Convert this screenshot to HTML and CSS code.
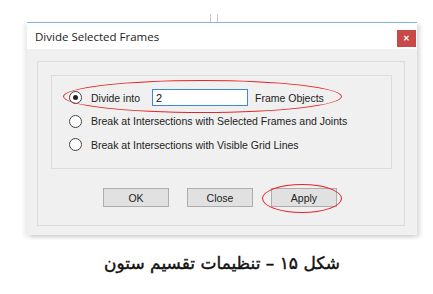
FILE: index.html
```html
<!DOCTYPE html>
<html lang="en">
<head>
    <meta charset="UTF-8">
    <title>Divide Selected Frames</title>
    <link rel="stylesheet" href="styles.css">
</head>
<body>
    <div class="page">
        <div class="splitter"></div>

        <div class="dialog">
            <div class="title-bar">
                <span class="title">Divide Selected Frames</span>
                <button class="close-btn">&#x2715;</button>
            </div>

            <div class="dialog-body">
                <div class="outer-box">
                    <div class="inner-box">
                        <label class="option">
                            <span class="radio checked"></span>
                            <span class="option-label">Divide into</span>
                            <input class="count-input" type="text" value="2">
                            <span class="suffix">Frame Objects</span>
                        </label>
                        <label class="option">
                            <span class="radio"></span>
                            <span>Break at Intersections with Selected Frames and Joints</span>
                        </label>
                        <label class="option">
                            <span class="radio"></span>
                            <span>Break at Intersections with Visible Grid Lines</span>
                        </label>
                    </div>

                    <div class="buttons">
                        <button class="btn">OK</button>
                        <button class="btn">Close</button>
                        <button class="btn">Apply</button>
                    </div>
                </div>
            </div>
        </div>

        <p class="caption" dir="rtl">شکل ۱۵ – تنظیمات تقسیم ستون</p>

        <!-- red marks drawn over the screenshot -->
        <div class="mark mark-divide"></div>
        <div class="mark mark-apply"></div>
    </div>
</body>
</html>
```

FILE: styles.css
```css
* {
    margin: 0;
    padding: 0;
    box-sizing: border-box;
}

body {
    background-color: #fff;
    font-family: 'Liberation Sans', Arial, sans-serif;
    color: #1a1a1a;
}

.page {
    position: relative;
    width: 433px;
    height: 294px;
    padding: 22px 0 0 27px;
}

.splitter {
    position: absolute;
    left: 210px;
    top: 14px;
    width: 8px;
    height: 8px;
    border-left: 1px solid #c8c8c8;
    border-right: 1px solid #c8c8c8;
}

.dialog {
    width: 390px;
    height: 213px;
    border-top: 1px solid #8ab4dc;
    background-color: #f0f0f0;
    box-shadow: -3px 2px 4px rgba(0, 0, 0, 0.08), 3px 2px 4px rgba(0, 0, 0, 0.14);
}

.title-bar {
    height: 26px;
    background-color: #fff;
    display: flex;
    align-items: flex-start;
    justify-content: space-between;
    padding: 6px 1px 0 8px;
}

.title {
    font-family: 'Open Sans', sans-serif;
    font-size: 11.5px;
    color: #222;
}

.close-btn {
    margin-top: 1px;
    width: 19px;
    height: 17px;
    border: none;
    background-color: #c94848;
    color: #fff;
    font-size: 8px;
    font-weight: bold;
    line-height: 17px;
}

.dialog-body {
    padding: 12px 12px 10px 10px;
}

.outer-box {
    height: 165px;
    border: 1px solid #dcdcdc;
    padding: 13px 12px 0 13px;
}

.inner-box {
    height: 94px;
    border: 1px solid #dcdcdc;
    padding: 10px 0 0 17px;
    display: flex;
    flex-direction: column;
}

.option {
    display: flex;
    align-items: center;
    height: 23.5px;
    font-size: 10.5px;
    color: #222;
}

.radio {
    width: 13px;
    height: 13px;
    border: 1px solid #444;
    border-radius: 50%;
    background-color: #fff;
    margin-right: 9px;
    display: flex;
    align-items: center;
    justify-content: center;
}

.radio.checked::after {
    content: '';
    width: 5px;
    height: 5px;
    border-radius: 50%;
    background-color: #222;
}

.option-label {
    width: 61px;
}

.count-input {
    width: 96px;
    height: 17px;
    border: 1px solid #3c8ad6;
    font-family: 'Liberation Sans', Arial, sans-serif;
    font-size: 11px;
    padding: 0 3px;
    color: #111;
    outline: none;
}

.suffix {
    margin-left: 7px;
}

.buttons {
    display: flex;
    gap: 18px;
    padding: 19px 0 0 52px;
}

.btn {
    width: 66px;
    height: 19px;
    border: 1px solid #adadad;
    background-color: #e1e1e1;
    font-family: 'Liberation Sans', Arial, sans-serif;
    font-size: 10.5px;
    color: #222;
}

.caption {
    margin: 18px 0 0 0;
    width: 390px;
    text-align: center;
    font-family: 'DejaVu Sans', sans-serif;
    font-size: 17px;
    color: #111;
    -webkit-text-stroke: 0.4px #111;
}

.mark {
    position: absolute;
    border: 1px solid #e32626;
    border-radius: 50%;
}

.mark-divide {
    left: 63px;
    top: 80px;
    width: 279px;
    height: 33px;
}

.mark-apply {
    left: 262px;
    top: 184px;
    width: 80px;
    height: 29px;
}
```
